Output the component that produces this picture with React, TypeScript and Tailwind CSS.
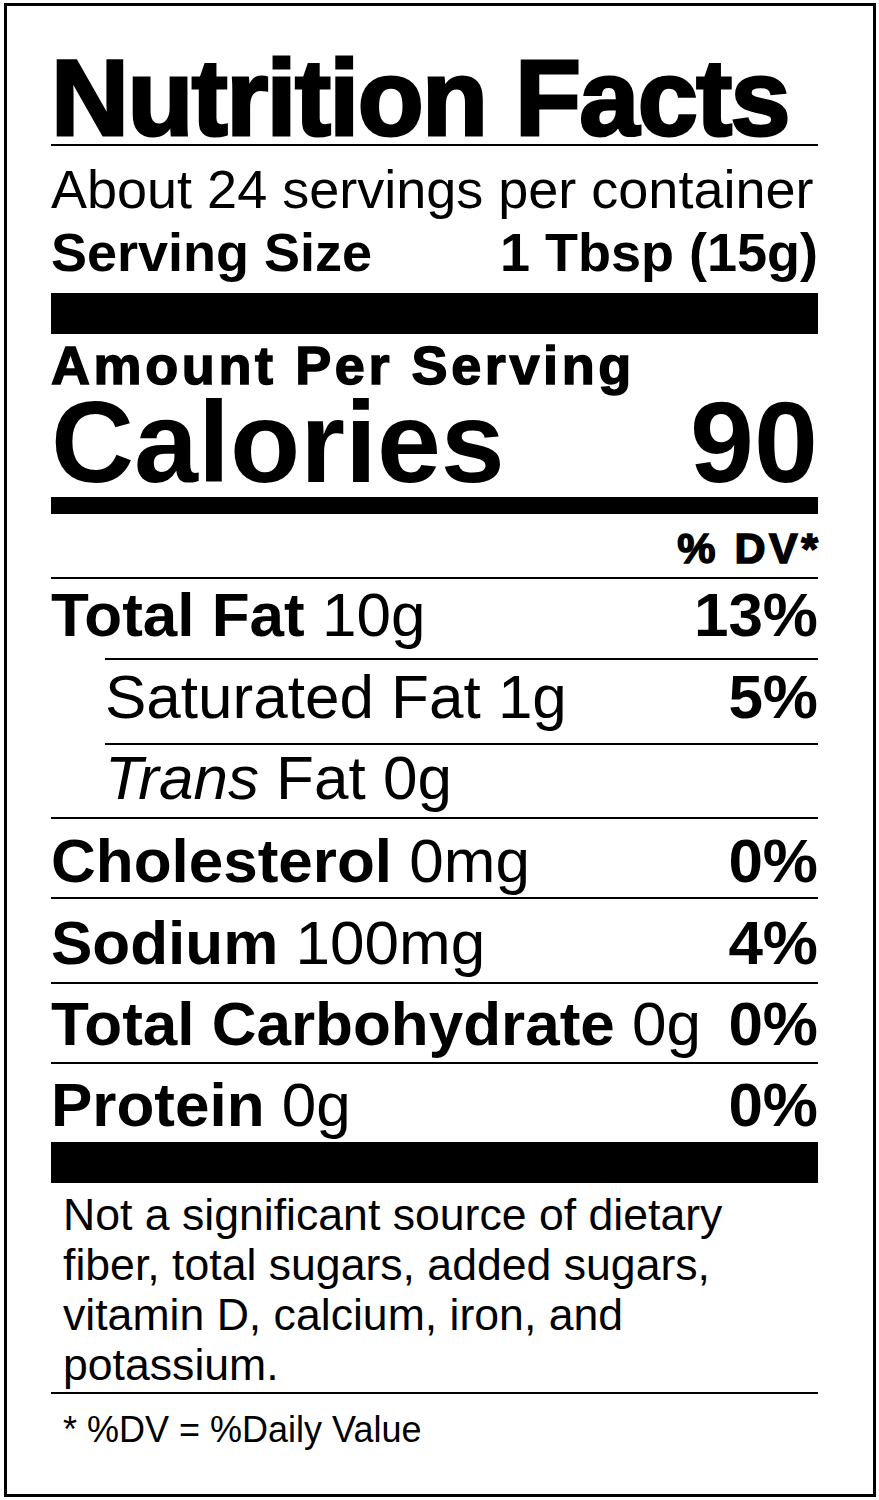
import React from "react";

function Line({ indent = false }: { indent?: boolean }) {
  return <div className={indent ? "ml-[54px] h-[2px] bg-black" : "h-[2px] bg-black"} />;
}

function Row({
  cls,
  children,
  right,
}: {
  cls: string;
  children: React.ReactNode;
  right?: string;
}) {
  return (
    <div className={`flex justify-between items-baseline text-[62px] leading-[61px] ${cls}`}>
      <span className="whitespace-nowrap">{children}</span>
      {right ? <span className="font-bold whitespace-nowrap">{right}</span> : null}
    </div>
  );
}

export default function App() {
  return (
    <div className="bg-white w-[879px] min-h-[1500px] pt-[3px] pl-[4px] text-black [font-family:'Liberation_Sans',Arial,Helvetica,sans-serif]">
      <div className="w-[872px] h-[1494px] border-[3px] border-black pl-[44px] pr-[55px] pt-[46px]">
        <h1 className="text-[108px] leading-[92px] font-bold tracking-[-1.6px] whitespace-nowrap [-webkit-text-stroke:3px_black]">
          Nutrition Facts
        </h1>
        <Line />
        <div className="mt-[17px] text-[54px] leading-[53px] whitespace-nowrap">
          About 24 servings per container
        </div>
        <div className="mt-[10px] flex justify-between text-[54px] leading-[53px] font-bold whitespace-nowrap">
          <span>Serving Size</span>
          <span>1 Tbsp (15g)</span>
        </div>
        <div className="mt-[14px] h-[41px] bg-black" />
        <div className="mt-[6px] text-[54px] leading-[50px] font-bold tracking-[3.6px] whitespace-nowrap [-webkit-text-stroke:1.5px_black]">
          Amount Per Serving
        </div>
        <div className="mt-[7px] flex justify-between items-baseline text-[115px] leading-[90px] font-bold">
          <span>Calories</span>
          <span>90</span>
        </div>
        <div className="mt-[10px] h-[17px] bg-black" />
        <div className="mt-[13px] flex justify-end">
          <span className="text-[43px] leading-[43px] font-bold tracking-[3.5px] -mr-[3.5px] whitespace-nowrap [-webkit-text-stroke:1.5px_black]">
            % DV*
          </span>
        </div>
        <div className="mt-[7px]">
          <Line />
        </div>
        <Row cls="pt-[5px] pb-[13px]" right="13%">
          <b>Total Fat</b> 10g
        </Row>
        <Line indent />
        <div className="ml-[54px]">
          <Row cls="pt-[6px] pb-[16px]" right="5%">
            Saturated Fat 1g
          </Row>
        </div>
        <Line indent />
        <div className="ml-[54px]">
          <Row cls="pt-[2px] pb-[9px]">
            <i>Trans</i> Fat 0g
          </Row>
        </div>
        <Line />
        <Row cls="pt-[11px] pb-[6px]" right="0%">
          <b>Cholesterol</b> 0mg
        </Row>
        <Line />
        <Row cls="pt-[13px] pb-[9px]" right="4%">
          <b>Sodium</b> 100mg
        </Row>
        <Line />
        <Row cls="pt-[9px] pb-[8px]" right="0%">
          <b>Total Carbohydrate</b> 0g
        </Row>
        <Line />
        <Row cls="pt-[10px] pb-[7px]" right="0%">
          <b>Protein</b> 0g
        </Row>
        <div className="h-[41px] bg-black" />
        <p className="mt-[7px] pl-[12px] text-[44.6px] leading-[50px] whitespace-nowrap">
          Not a significant source of dietary
          <br />
          fiber, total sugars, added sugars,
          <br />
          vitamin D, calcium, iron, and
          <br />
          potassium.
        </p>
        <div className="mt-[2px]">
          <Line />
        </div>
        <div className="mt-[18px] pl-[12px] text-[36px] leading-[35px] whitespace-nowrap">
          * %DV = %Daily Value
        </div>
      </div>
    </div>
  );
}
